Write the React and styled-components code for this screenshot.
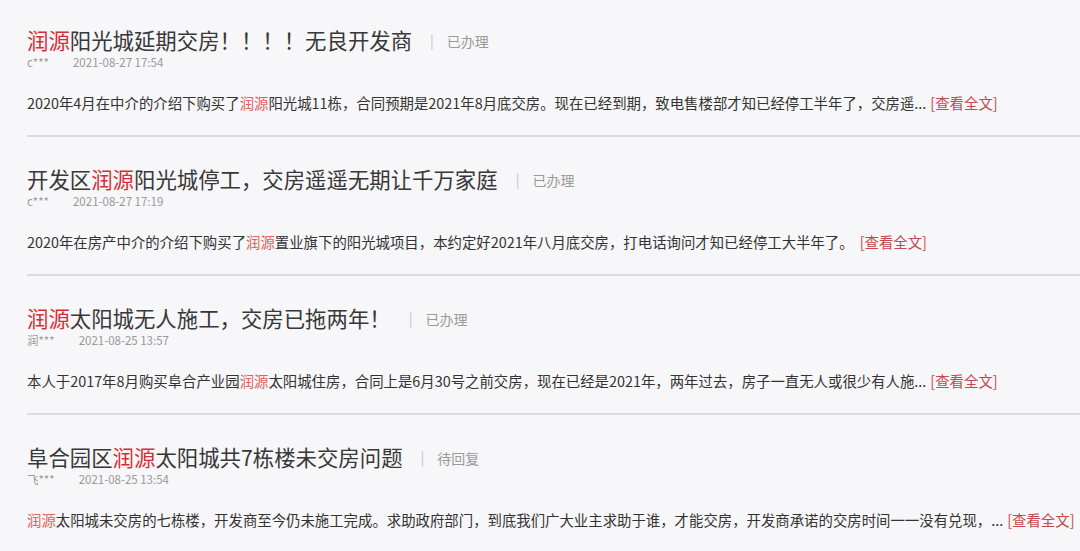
import React from 'react'
import styled, { createGlobalStyle } from 'styled-components'

const GlobalStyle = createGlobalStyle`
  html, body {
    margin: 0;
    padding: 0;
    background: #f7f6f8;
  }
  body {
    font-family: "Noto Sans CJK SC", "Liberation Sans", sans-serif;
    color: #333;
  }
`

const List = styled.div`
  width: 1080px;
  height: 551px;
  overflow: hidden;
  padding-left: 27px;
  box-sizing: border-box;
`

const Item = styled.div`
  padding: 27px 0 22px;
  border-bottom: 2px solid #dcdbdd;

  &:first-child {
    padding-top: 25px;
  }
`

const TitleRow = styled.div`
  display: flex;
  align-items: center;
  height: 30px;
  white-space: nowrap;
`

const Title = styled.span`
  font-size: 21.4px;
  line-height: 30px;
  color: #383838;
`

const Hl = styled.span`
  color: ${({ soft }) => (soft ? '#e2605f' : '#d42f35')};
`

const Divider = styled.span`
  margin: 0 13px 0 18px;
  font-size: 14px;
  color: #c4c4c4;
`

const Status = styled.span`
  font-size: 14px;
  color: #9a9a9a;
  padding-top: 1px;
`

const Meta = styled.div`
  display: flex;
  height: 14px;
  line-height: 14px;
  font-size: 11.5px;
  color: #999;
`

const User = styled.span`
  margin-right: 24px;
`

const Body = styled.div`
  margin-top: 24px;
  font-size: 14.4px;
  line-height: 20px;
  color: #333;
  white-space: nowrap;
`

const More = styled.span`
  margin-left: ${({ gap }) => gap || 4}px;
  color: #c6474f;
`

const hl = (text, soft) =>
  text.split(/(润源)/).map((part, i) =>
    part === '润源' ? <Hl key={i} soft={soft}>{part}</Hl> : <React.Fragment key={i}>{part}</React.Fragment>
  )

const posts = [
  {
    title: '润源阳光城延期交房！！！！无良开发商',
    status: '已办理',
    user: 'c***',
    time: '2021-08-27 17:54',
    body: '2020年4月在中介的介绍下购买了润源阳光城11栋，合同预期是2021年8月底交房。现在已经到期，致电售楼部才知已经停工半年了，交房遥...',
  },
  {
    title: '开发区润源阳光城停工，交房遥遥无期让千万家庭',
    status: '已办理',
    user: 'c***',
    time: '2021-08-27 17:19',
    body: '2020年在房产中介的介绍下购买了润源置业旗下的阳光城项目，本约定好2021年八月底交房，打电话询问才知已经停工大半年了。',
    gap: 6,
  },
  {
    title: '润源太阳城无人施工，交房已拖两年！',
    status: '已办理',
    user: '润***',
    time: '2021-08-25 13:57',
    body: '本人于2017年8月购买阜合产业园润源太阳城住房，合同上是6月30号之前交房，现在已经是2021年，两年过去，房子一直无人或很少有人施...',
  },
  {
    title: '阜合园区润源太阳城共7栋楼未交房问题',
    status: '待回复',
    user: '飞***',
    time: '2021-08-25 13:54',
    body: '润源太阳城未交房的七栋楼，开发商至今仍未施工完成。求助政府部门，到底我们广大业主求助于谁，才能交房，开发商承诺的交房时间一一没有兑现，...',
  },
]

export default function App() {
  return (
    <>
      <GlobalStyle />
      <List>
        {posts.map((p, i) => (
          <Item key={i}>
            <TitleRow>
              <Title>{hl(p.title)}</Title>
              <Divider>|</Divider>
              <Status>{p.status}</Status>
            </TitleRow>
            <Meta>
              <User>{p.user}</User>
              <span>{p.time}</span>
            </Meta>
            <Body>
              {hl(p.body, true)}
              <More gap={p.gap}>[查看全文]</More>
            </Body>
          </Item>
        ))}
      </List>
    </>
  )
}
